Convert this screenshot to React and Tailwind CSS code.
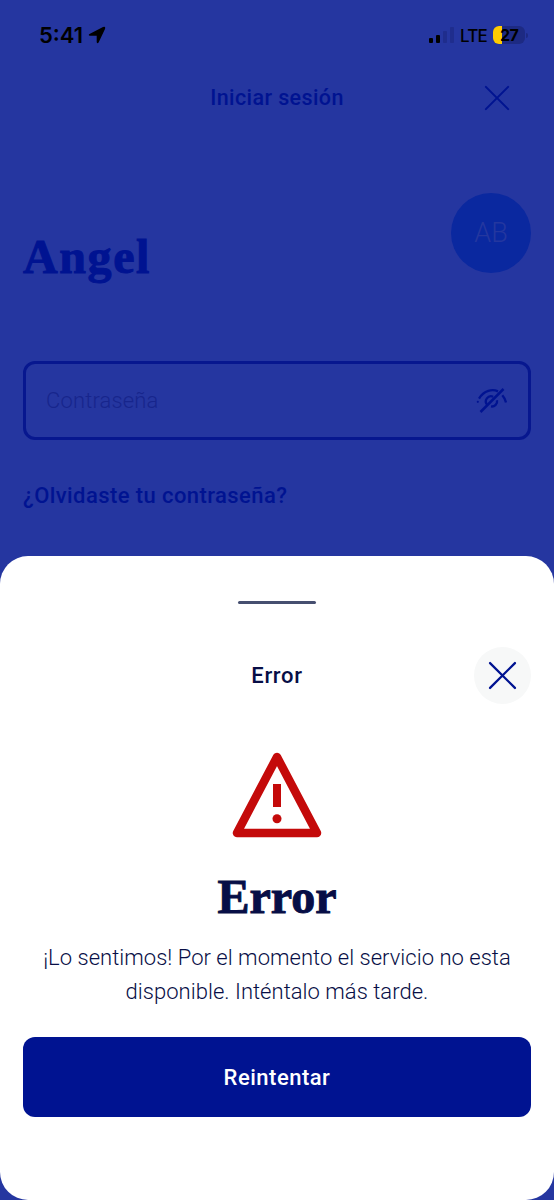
import React from 'react';

function CloseIcon({ className }) {
  return (
    <svg viewBox="0 0 28 28" className={className} fill="none" stroke="currentColor" strokeWidth="2.2" strokeLinecap="round">
      <path d="M2 2 26 26M26 2 2 26" />
    </svg>
  );
}

function HiddenEyeIcon() {
  return (
    <svg viewBox="0 0 32 28" className="w-8 h-7" fill="none" stroke="currentColor" strokeWidth="2.3">
      <path d="M4 11.6C9 3.2 17.500 1.800 23 4.400" />
      <path d="M27.300 8.200Q30 11.200 31 15.500" />
      <path d="M12.300 18A5.200 5.200 0 0 1 18.200 9.700" />
      <path d="M22 13.200A5.200 5.200 0 0 1 16 19.400" />
      <path d="M5.500 25 28.500 2" strokeWidth="2.500" />
      <circle cx="2.800" cy="14.800" r="1.100" fill="currentColor" stroke="none" />
    </svg>
  );
}

function WarningIcon() {
  return (
    <svg viewBox="0 0 90 86" className="w-[90px] h-[86px]">
      <path d="M45 5 5 81H85Z" fill="none" stroke="#c40a0a" strokeWidth="8.500" strokeLinejoin="round" />
      <path d="M41 32H49V55H41Z" fill="#c40a0a" />
      <circle cx="45" cy="66.800" r="4.500" fill="#c40a0a" />
    </svg>
  );
}

function StatusBar() {
  return (
    <div className="h-[70px] pl-[39px] pr-[26px] flex items-center justify-between text-black">
      <div className="flex items-center gap-[5px]">
        <span className="font-['Inter',sans-serif] text-[22px] font-semibold">5:41</span>
        <svg viewBox="0 0 18 18" className="w-[18px] h-[18px]">
          <path d="M1.500 8 15 1Q17.900 0 17 2.900L10.600 16.500Q9.300 18.300 8.700 16.200V9.800H2Q-.2 9.200 1.500 8Z" fill="currentColor" />
        </svg>
      </div>
      <div className="flex items-center">
        <div className="flex items-end gap-[3px] h-4">
          <span className="w-1 h-[5px] rounded-[1px] bg-black" />
          <span className="w-1 h-2 rounded-[1px] bg-black" />
          <span className="w-1 h-3 rounded-[1px] bg-[#1f2d8d]" />
          <span className="w-1 h-4 rounded-[1px] bg-[#1f2d8d]" />
        </div>
        <span className="ml-1.5 font-['Inter',sans-serif] text-[17px] leading-6 font-medium tracking-[-0.8px] relative top-px">LTE</span>
        <div className="relative ml-1.5 w-8 h-[18px] rounded-md overflow-hidden bg-[#1d2a83] flex items-center justify-center">
          <span className="absolute left-0 inset-y-0 w-[9px] bg-[#ffcc00]" />
          <span className="relative font-['Inter',sans-serif] text-[16px] leading-none font-bold tracking-[-0.7px]">27</span>
        </div>
        <span className="ml-px w-[2px] h-[5px] rounded-r-full bg-[#1d2a83]" />
      </div>
    </div>
  );
}

function LoginScreen() {
  return (
    <div className="h-[556px] text-[#001391]">
      <StatusBar />
      <header className="h-14 px-[43px] grid grid-cols-3 items-center">
        <span />
        <h2 className="text-[21.5px] font-medium tracking-[0.4px] text-center whitespace-nowrap">Iniciar sesión</h2>
        <button className="justify-self-end"><CloseIcon className="w-7 h-[26px]" /></button>
      </header>
      <div className="mt-[67px] h-20 px-[23px] flex justify-between">
        <h1 className="pt-9 font-['Liberation_Serif',serif] text-[48px] leading-[56px] font-bold tracking-[1.6px] [-webkit-text-stroke:1px_currentColor]">Angel</h1>
        <div className="w-20 h-20 rounded-full bg-[#0a289f] text-[#24379f] text-[27px] font-light flex items-center justify-center">AB</div>
      </div>
      <div className="mt-[88px] mx-[23px] h-[79px] rounded-xl border-3 border-[#07178f] pl-5 pr-[21px] flex items-center justify-between">
        <span className="text-[22px] font-light tracking-[0.15px] text-[#17258c]">Contraseña</span>
        <HiddenEyeIcon />
      </div>
      <p className="mt-10 ml-[23px] text-[22px] leading-8 font-medium tracking-[0.42px]">¿Olvidaste tu contraseña?</p>
    </div>
  );
}

function ErrorSheet() {
  return (
    <section className="h-[644px] rounded-[28px] bg-white px-[23px] flex flex-col items-center text-[#070e46]">
      <div className="mt-[45px] w-[78px] h-[3px] shrink-0 rounded-full bg-[#464f70]" />
      <div className="mt-[43px] w-full grid grid-cols-3 items-center">
        <span />
        <h2 className="text-center text-[22px] font-medium tracking-[0.7px]">Error</h2>
        <button className="justify-self-end w-[57px] h-[57px] rounded-full bg-[#f7f8f8] text-[#001391] flex items-center justify-center">
          <CloseIcon className="w-[29px] h-[29px]" />
        </button>
      </div>
      <div className="mt-12"><WarningIcon /></div>
      <h1 className="mt-[31px] font-['Liberation_Serif',serif] text-[48px] leading-[56px] font-bold [-webkit-text-stroke:1px_currentColor]">Error</h1>
      <p className="mt-4 text-center text-[22px] leading-[34px] font-light tracking-[0.03px]">
        ¡Lo sentimos! Por el momento el servicio no esta<br />disponible. Inténtalo más tarde.
      </p>
      <button className="mt-7 w-full h-20 shrink-0 rounded-xl bg-[#001391] text-white text-[22px] font-medium tracking-[0.5px]">Reintentar</button>
    </section>
  );
}

export default function App() {
  return (
    <main className="w-[554px] h-[1200px] overflow-hidden bg-[#2536a0] font-['Roboto',sans-serif]">
      <LoginScreen />
      <ErrorSheet />
    </main>
  );
}
